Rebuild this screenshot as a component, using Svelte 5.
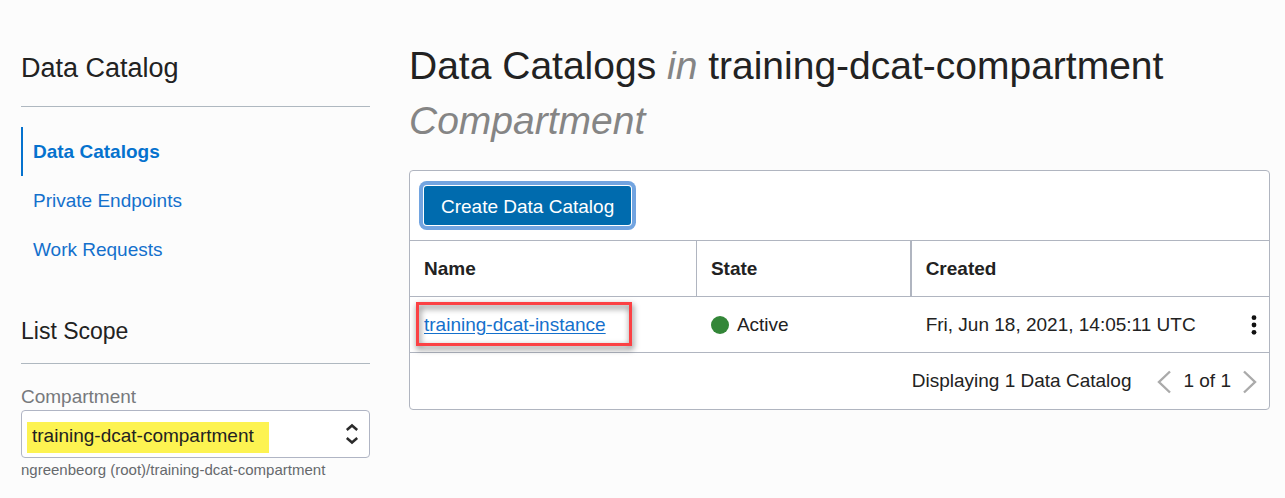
<script>
  const links = [
    { label: 'Data Catalogs', active: true },
    { label: 'Private Endpoints', active: false },
    { label: 'Work Requests', active: false }
  ];
  const rows = [
    { name: 'training-dcat-instance', state: 'Active', created: 'Fri, Jun 18, 2021, 14:05:11 UTC', marked: true }
  ];
</script>

<div class="page">
  <aside>
    <h2 class="title">Data Catalog</h2>
    <nav>
      {#each links as link}
        <a href="#top" class:active={link.active} aria-current={link.active ? 'page' : undefined}>{link.label}</a>
      {/each}
    </nav>
    <h3 class="scope">List Scope</h3>
    <label for="compartment">Compartment</label>
    <div class="picker">
      <select id="compartment">
        <option>training-dcat-compartment</option>
      </select>
      <svg class="arrows" width="14" height="22" viewBox="0 0 14 22" fill="none" stroke="#2b2b2b" stroke-width="2.5" aria-hidden="true">
        <path d="M1.8 7 L7 2.5 L12.2 7 M1.8 15 L7 19.5 L12.2 15" />
      </svg>
    </div>
    <p class="path">ngreenbeorg (root)/training-dcat-compartment</p>
  </aside>

  <main>
    <h1>Data Catalogs <em>in</em> training-dcat-compartment <em>Compartment</em></h1>
    <section class="card">
      <div class="toolbar">
        <button class="create" type="button">Create Data Catalog</button>
      </div>
      <table>
        <colgroup>
          <col class="col-name" />
          <col class="col-state" />
          <col />
        </colgroup>
        <thead>
          <tr><th>Name</th><th>State</th><th>Created</th></tr>
        </thead>
        <tbody>
          {#each rows as row}
            <tr>
              <td>
                <a class="instance" class:marked={row.marked} href="#top">{row.name}</a>
              </td>
              <td><span class="state"><i></i>{row.state}</span></td>
              <td>
                <div class="created">
                  <span>{row.created}</span>
                  <button class="icon kebab" type="button" aria-label="Actions">
                    <svg width="6" height="20" viewBox="0 0 6 20" fill="#111" aria-hidden="true">
                      <circle cx="3" cy="2.7" r="2.4" /><circle cx="3" cy="10" r="2.4" /><circle cx="3" cy="17.3" r="2.4" />
                    </svg>
                  </button>
                </div>
              </td>
            </tr>
          {/each}
        </tbody>
      </table>
      <footer>
        <span class="count">Displaying 1 Data Catalog</span>
        <button class="icon page-step" type="button" aria-label="Previous page">
          <svg width="14" height="24" viewBox="0 0 14 24" fill="none" stroke="#aaa" stroke-width="2.4" aria-hidden="true"><path d="M13 1.5 L2 12 L13 22.5" /></svg>
        </button>
        <span>1 of 1</span>
        <button class="icon page-step" type="button" aria-label="Next page">
          <svg width="14" height="24" viewBox="0 0 14 24" fill="none" stroke="#aaa" stroke-width="2.4" aria-hidden="true"><path d="M1 1.5 L12 12 L1 22.5" /></svg>
        </button>
      </footer>
    </section>
  </main>
</div>

<style>
  :global(body) {
    background: #fcfcfc;
  }
  .page {
    box-sizing: border-box;
    display: grid;
    grid-template-columns: 349fr 861fr;
    gap: 39px;
    align-items: start;
    padding: 38px 15px 16px 21px;
    font: 19px/24px "Liberation Sans", Arial, sans-serif;
    color: #222;
  }
  h1, h2, h3, p {
    margin: 0;
    font-weight: 400;
  }
  .title, .scope {
    border-bottom: 1px solid #afb8c0;
  }
  .title {
    font-size: 27px;
    line-height: 60px;
    padding-bottom: 8px;
  }
  .scope {
    font-size: 23px;
    line-height: 32px;
    padding-bottom: 16px;
    margin-top: 41px;
  }
  nav {
    display: flex;
    flex-direction: column;
    margin-top: 20px;
  }
  nav a {
    padding: 13px 10px 12px;
    border-left: 2px solid transparent;
    color: #1470cc;
    text-decoration: none;
  }
  nav a.active {
    border-left-color: #0572ce;
    color: #0572ce;
    font-weight: 700;
  }
  label {
    display: block;
    margin-top: 21px;
    color: #77797c;
  }
  .picker {
    position: relative;
    margin-top: 1px;
  }
  select {
    appearance: none;
    display: block;
    box-sizing: border-box;
    width: 100%;
    height: 48px;
    padding: 4px 40px 0 10px;
    border: 1px solid #b0b5c4;
    border-radius: 4px;
    background: linear-gradient(#fdf351, #fdf351) 5px 11px / 242px 31px no-repeat #fff;
    font: inherit;
    line-height: 30px;
    color: #222;
  }
  .arrows {
    position: absolute;
    right: 11px;
    top: 13px;
  }
  .path {
    font-size: 15px;
    color: #66696c;
  }
  h1 {
    font-size: 39px;
    line-height: 55px;
    margin-bottom: 22px;
  }
  h1 em {
    color: #858585;
  }
  .card {
    border: 1px solid #b0b5c0;
    border-radius: 4px;
    background: #fff;
  }
  .toolbar {
    padding: 15px 14px;
  }
  .create {
    display: block;
    height: 39px;
    padding: 2px 17px 0;
    border: 0;
    border-radius: 3px;
    background: #006bae;
    color: #fff;
    font: inherit;
    box-shadow: 0 0 0 1px #fff, 0 0 0 5px #72a4e0;
  }
  table {
    width: 100%;
    table-layout: fixed;
    border-spacing: 0;
  }
  .col-name {
    width: 33.4%;
  }
  .col-state {
    width: 25%;
  }
  th, td {
    box-sizing: border-box;
    height: 56px;
    padding: 0 12px 0 14px;
    border-top: 1px solid #b0b5c0;
    text-align: left;
  }
  th:first-child {
    border-right: 1px solid #b0b5c0;
  }
  th:nth-child(2) {
    border-right: 2px solid #b0b5c0;
  }
  .instance {
    position: relative;
    color: #1470cc;
    text-underline-offset: 2px;
  }
  .marked::after {
    content: "";
    position: absolute;
    inset: -12px -26px -11px -8px;
    border: 3px solid #fb4144;
    filter: drop-shadow(1px 3px 3px rgba(0, 0, 0, 0.6));
    pointer-events: none;
  }
  .state {
    display: flex;
    align-items: center;
    gap: 8px;
  }
  .state i {
    width: 18px;
    height: 18px;
    border-radius: 50%;
    background: #338638;
  }
  .created {
    display: flex;
    align-items: center;
    justify-content: space-between;
  }
  .icon {
    display: flex;
    padding: 0;
    border: 0;
    background: none;
  }
  .page-step {
    padding-top: 2px;
  }
  footer {
    display: flex;
    align-items: center;
    justify-content: flex-end;
    gap: 12px;
    height: 56px;
    padding-right: 12px;
    border-top: 1px solid #b0b5c0;
  }
  .count {
    margin-right: 14px;
  }
</style>
